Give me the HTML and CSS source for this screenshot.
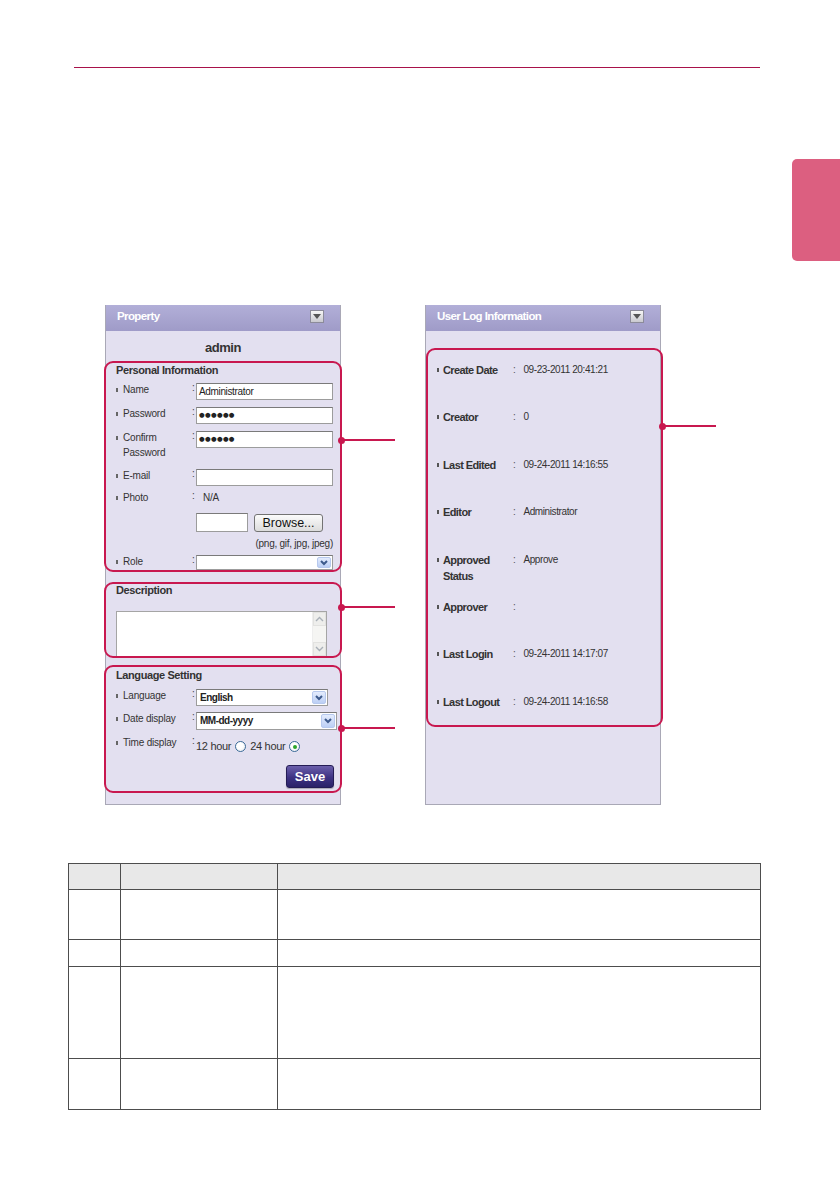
FILE: index.html
```html
<!DOCTYPE html>
<html lang="en">
<head>
<meta charset="utf-8">
<title>User Property</title>
<link rel="stylesheet" href="styles.css">
</head>
<body>
<div class="page">
  <div class="rule"></div>

  <div class="tab-row"><div class="chapter-tab"></div></div>

  <div class="figure">
    <!-- Property panel -->
    <section class="panel">
      <header class="panel-head">
        <span class="panel-title">Property</span>
        <span class="collapse"><svg width="8" height="5" viewBox="0 0 8 5"><path d="M0 0h8L4 5z" fill="#555"/></svg></span>
      </header>
      <div class="user-name">admin</div>

      <div class="group group-personal callout c-personal">
        <h3 class="group-title">Personal Information</h3>

        <div class="form-row mt6">
          <span class="label">Name</span><span class="colon">:</span>
          <span class="input w137">Administrator</span>
        </div>
        <div class="form-row mt7">
          <span class="label">Password</span><span class="colon">:</span>
          <span class="input w137 pwd">●●●●●●</span>
        </div>
        <div class="form-row mt7">
          <span class="label">Confirm<br>Password</span><span class="colon">:</span>
          <span class="input w137 pwd">●●●●●●</span>
        </div>
        <div class="form-row mt9">
          <span class="label">E-mail</span><span class="colon">:</span>
          <span class="input w137"></span>
        </div>
        <div class="form-row mt5">
          <span class="label">Photo</span><span class="colon">:</span>
          <span class="plain">N/A</span>
        </div>
        <div class="form-row mt8">
          <span class="label-empty"></span><span class="colon"></span>
          <span class="file-pick">
            <span class="input file-box"></span>
            <span class="browse-btn">Browse...</span>
          </span>
        </div>
        <div class="file-note">(png, gif, jpg, jpeg)</div>
        <div class="form-row mt5">
          <span class="label">Role</span><span class="colon">:</span>
          <span class="select w137 h15"><span class="select-value"></span><span class="select-btn"><svg width="8" height="6" viewBox="0 0 8 6"><path d="M1 1l3 3 3-3" fill="none" stroke="#3d5a8c" stroke-width="2"/></svg></span></span>
        </div>
      </div>

      <div class="group group-desc callout c-desc">
        <h3 class="group-title">Description</h3>
        <div class="textarea">
          <div class="scrollbar">
            <span class="scroll-btn"><svg width="9" height="6" viewBox="0 0 9 6"><path d="M1 5l3.5-3.5L8 5" fill="none" stroke="#a9b0b8" stroke-width="1.4"/></svg></span>
            <span class="scroll-btn"><svg width="9" height="6" viewBox="0 0 9 6"><path d="M1 1l3.5 3.5L8 1" fill="none" stroke="#a9b0b8" stroke-width="1.4"/></svg></span>
          </div>
        </div>
      </div>

      <div class="group group-lang callout c-lang">
        <h3 class="group-title">Language Setting</h3>
        <div class="form-row mt7">
          <span class="label">Language</span><span class="colon">:</span>
          <span class="select w132 h17"><span class="select-value">English</span><span class="select-btn"><svg width="8" height="6" viewBox="0 0 8 6"><path d="M1 1l3 3 3-3" fill="none" stroke="#3d5a8c" stroke-width="2"/></svg></span></span>
        </div>
        <div class="form-row mt6">
          <span class="label">Date display</span><span class="colon">:</span>
          <span class="select w141 h18"><span class="select-value">MM-dd-yyyy</span><span class="select-btn"><svg width="8" height="6" viewBox="0 0 8 6"><path d="M1 1l3 3 3-3" fill="none" stroke="#3d5a8c" stroke-width="2"/></svg></span></span>
        </div>
        <div class="form-row mt6">
          <span class="label">Time display</span><span class="colon">:</span>
          <span class="radios">
            <span>12 hour</span><span class="radio"></span>
            <span>24 hour</span><span class="radio checked"></span>
          </span>
        </div>
        <div class="save-row"><span class="save-btn">Save</span></div>
      </div>
    </section>

    <!-- User log panel -->
    <section class="panel">
      <header class="panel-head">
        <span class="panel-title">User Log Information</span>
        <span class="collapse"><svg width="8" height="5" viewBox="0 0 8 5"><path d="M0 0h8L4 5z" fill="#555"/></svg></span>
      </header>

      <div class="group group-log callout c-log">
        <dl class="log-list">
          <div class="log-row"><dt>Create Date</dt><dd>09-23-2011 20:41:21</dd></div>
          <div class="log-row"><dt>Creator</dt><dd>0</dd></div>
          <div class="log-row"><dt>Last Edited</dt><dd>09-24-2011 14:16:55</dd></div>
          <div class="log-row"><dt>Editor</dt><dd>Administrator</dd></div>
          <div class="log-row"><dt>Approved<br>Status</dt><dd>Approve</dd></div>
          <div class="log-row"><dt>Approver</dt><dd></dd></div>
          <div class="log-row"><dt>Last Login</dt><dd>09-24-2011 14:17:07</dd></div>
          <div class="log-row"><dt>Last Logout</dt><dd>09-24-2011 14:16:58</dd></div>
        </dl>
      </div>
    </section>
  </div>

  <table class="spec">
    <colgroup><col class="c1"><col class="c2"><col class="c3"></colgroup>
    <tr class="r-head"><th></th><th></th><th></th></tr>
    <tr class="r1"><td></td><td></td><td></td></tr>
    <tr class="r2"><td></td><td></td><td></td></tr>
    <tr class="r3"><td></td><td></td><td></td></tr>
    <tr class="r4"><td></td><td></td><td></td></tr>
  </table>
</div>
</body>
</html>
```

FILE: styles.css
```css
* { box-sizing: border-box; }

html, body {
  margin: 0;
  padding: 0;
  background: #ffffff;
}

.page {
  width: 840px;
  height: 1192px;
  overflow: hidden;
  font-family: "Liberation Sans", Arial, sans-serif;
}

/* page rule and chapter tab */
.rule {
  margin: 67px 80px 0 74px;
  height: 1px;
  background: #a8124a;
}

.tab-row {
  display: flex;
  justify-content: flex-end;
  margin-top: 91px;
}

.chapter-tab {
  width: 48px;
  height: 102px;
  background: #dc5f80;
  border-radius: 5px 0 0 5px;
}

/* screenshot figure */
.figure {
  display: flex;
  gap: 84px;
  margin: 44px 0 0 105px;
}

.panel {
  width: 236px;
  height: 500px;
  background: #e3e0f0;
  border: 1px solid #a9a8b6;
  border-top: none;
  font-family: "Liberation Sans", Arial, sans-serif;
  color: #333;
  display: flex;
  flex-direction: column;
}

.panel-head {
  height: 26px;
  display: flex;
  justify-content: space-between;
  align-items: flex-start;
  padding: 4px 16px 0 11px;
  background: linear-gradient(#b2afd8, #9f9bc8);
}

.panel-title {
  color: #ffffff;
  font-weight: bold;
  font-size: 11.5px;
  letter-spacing: -0.6px;
  line-height: 15px;
  margin-top: 0;
}

.collapse {
  width: 14px;
  height: 13px;
  margin-top: 1px;
  display: flex;
  align-items: center;
  justify-content: center;
  border: 1px solid #8c8b9a;
  background: linear-gradient(#f6f6f6, #c9c9cf);
}

.user-name {
  height: 30px;
  padding-top: 10px;
  text-align: center;
  font-weight: bold;
  font-size: 13px;
  letter-spacing: -0.5px;
  line-height: 14px;
  color: #333;
}

/* outlined groups */
.group {
  position: relative;
  border: 2px solid #c8184f;
  border-radius: 9px;
  margin: 0 -2px;
  padding: 0 6px 0 10px;
}

.group-title {
  margin: 0;
  font-size: 11px;
  letter-spacing: -0.4px;
  font-weight: bold;
  line-height: 14px;
  color: #333;
}

.group-desc { margin-top: 10px; }
.group-desc .group-title { margin-top: -1px; }

.group-lang { margin-top: 7px; padding-bottom: 3px; }
.group-lang .group-title { margin-top: 1px; }

.group-log {
  margin: 17px -3px 0 0;
  height: 379px;
  padding: 12px 0 0 9px;
}

/* callout leader: dot on the group edge, line out to the right */
.callout::before {
  content: "";
  position: absolute;
  right: -5px;
  top: var(--cy);
  width: 7px;
  height: 7px;
  margin-top: -3.5px;
  border-radius: 50%;
  background: #c8184f;
  z-index: 2;
}

.callout::after {
  content: "";
  position: absolute;
  left: calc(100% + 1px);
  top: var(--cy);
  width: 54px;
  height: 2px;
  margin-top: -1px;
  background: #c8184f;
}

.c-personal { --cy: 77px; }
.c-desc { --cy: 23px; }
.c-lang { --cy: 61px; }
.c-log { --cy: 76px; }

/* form rows */
.form-row {
  display: grid;
  grid-template-columns: 76px 4px auto;
  align-items: start;
  font-size: 10px;
  letter-spacing: -0.2px;
}

.mt5 { margin-top: 5px; }
.mt6 { margin-top: 6px; }
.mt7 { margin-top: 7px; }
.mt8 { margin-top: 8px; }
.mt9 { margin-top: 9px; }

.label {
  line-height: 15px;
  margin-top: -1px;
  padding-left: 7px;
  position: relative;
  color: #333;
}

.label::before {
  content: "";
  position: absolute;
  left: 0;
  top: 6px;
  width: 2px;
  height: 4px;
  background: #666;
}

.colon {
  line-height: 11px;
  margin-top: -1px;
  font-size: 10px;
  color: #444;
}

.input {
  display: block;
  height: 17px;
  background: #ffffff;
  border: 1px solid #9c9c9c;
  border-top-color: #7a7a7a;
  padding: 0 2px;
  font-size: 10px;
  letter-spacing: -0.35px;
  line-height: 15px;
  color: #222;
}

.w137 { width: 137px; }

.pwd {
  font-family: "DejaVu Sans", sans-serif;
  font-size: 6.5px;
  letter-spacing: 0.3px;
  line-height: 14px;
}

.plain {
  padding-left: 7px;
  line-height: 13px;
  color: #333;
}

.file-pick {
  display: flex;
  gap: 6px;
}

.file-box {
  width: 52px;
  height: 19px;
}

.browse-btn {
  width: 69px;
  height: 18px;
  margin-top: 1px;
  border: 1px solid #737373;
  border-radius: 3px;
  background: linear-gradient(#fbfbfb, #dcdcdc);
  font-size: 12.5px;
  letter-spacing: 0;
  line-height: 16px;
  text-align: center;
  color: #111;
}

.file-note {
  margin-top: 5px;
  text-align: right;
  padding-right: 1px;
  font-size: 10px;
  letter-spacing: -0.25px;
  line-height: 13px;
  color: #333;
}

/* drop-down boxes */
.select {
  display: flex;
  justify-content: space-between;
  align-items: stretch;
  background: #ffffff;
  border: 1px solid #9c9c9c;
  border-top-color: #7a7a7a;
  padding: 1px;
}

.w132 { width: 132px; }
.w141 { width: 141px; }
.h15 { height: 15px; }
.h17 { height: 17px; }
.h18 { height: 18px; }

.select-value {
  padding-left: 2px;
  font-size: 10px;
  letter-spacing: -0.5px;
  line-height: 14px;
  font-weight: bold;
  color: #222;
}

.select-btn {
  width: 14px;
  display: flex;
  align-items: center;
  justify-content: center;
  border: 1px solid #b7c9ee;
  border-radius: 2px;
  background: linear-gradient(#e4ecfd, #bccff5);
}

/* description box */
.textarea {
  margin-top: 14px;
  width: 211px;
  height: 45px;
  background: #ffffff;
  border: 1px solid #a5a5a5;
  border-bottom: none;
  display: flex;
  justify-content: flex-end;
}

.scrollbar {
  width: 14px;
  display: flex;
  flex-direction: column;
  justify-content: space-between;
  background: #f5f5f3;
  border-left: 1px solid #eeeeee;
}

.scroll-btn {
  height: 14px;
  display: flex;
  align-items: center;
  justify-content: center;
  background: #eeeeec;
  border: 1px solid #e2e2e0;
}

/* time display radios */
.radios {
  display: flex;
  align-items: center;
  margin-top: 4px;
  line-height: 13px;
  font-size: 11px;
  letter-spacing: -0.3px;
  color: #333;
}

.radio {
  width: 11px;
  height: 11px;
  margin: 0 4px 0 4px;
  border-radius: 50%;
  border: 1px solid #3a6a98;
  background: radial-gradient(circle at 40% 40%, #ffffff 40%, #dfe4ea);
  position: relative;
}

.radio.checked::after {
  content: "";
  position: absolute;
  left: 2.5px;
  top: 2.5px;
  width: 4px;
  height: 4px;
  border-radius: 50%;
  background: #2ca52c;
}

.save-row {
  display: flex;
  justify-content: flex-end;
  margin-top: 12px;
}

.save-btn {
  width: 48px;
  height: 23px;
  border: 1px solid #241c55;
  border-radius: 3px;
  background: linear-gradient(#6b5fab, #3d3283 55%, #2b2268);
  color: #ffffff;
  font-weight: bold;
  font-size: 13px;
  line-height: 21px;
  text-align: center;
  box-shadow: 0 1px 1px rgba(0, 0, 0, 0.25);
}

/* user log list */
.log-list {
  margin: 0;
  display: grid;
  grid-template-rows: repeat(7, 47.4px) 16px;
}

.log-row {
  display: grid;
  grid-template-columns: 76px 11px auto;
  align-items: start;
}

.log-row dt {
  position: relative;
  padding-left: 6px;
  font-weight: bold;
  font-size: 11px;
  letter-spacing: -0.6px;
  line-height: 16px;
  color: #333;
}

.log-row dt::before {
  content: "";
  position: absolute;
  left: 0;
  top: 6px;
  width: 2px;
  height: 4px;
  background: #555;
}

.log-row dd {
  margin: 0;
  grid-column: 3;
  font-size: 10px;
  letter-spacing: -0.4px;
  line-height: 16px;
  color: #333;
}

.log-row dt + dd::before {
  content: ":";
  position: relative;
  left: -11px;
  margin-right: -3px;
  color: #555;
}

/* description table */
.spec {
  margin: 58px 0 0 68px;
  width: 692px;
  border-collapse: collapse;
  table-layout: fixed;
}

.spec col.c1 { width: 52px; }
.spec col.c2 { width: 157px; }
.spec col.c3 { width: 483px; }

.spec th,
.spec td {
  border: 1px solid #4d4d4d;
  padding: 0;
}

.spec tr.r-head th { background: #e8e8e8; height: 26px; }
.spec tr.r1 td { height: 50px; }
.spec tr.r2 td { height: 27px; }
.spec tr.r3 td { height: 92px; }
.spec tr.r4 td { height: 51px; }
```
